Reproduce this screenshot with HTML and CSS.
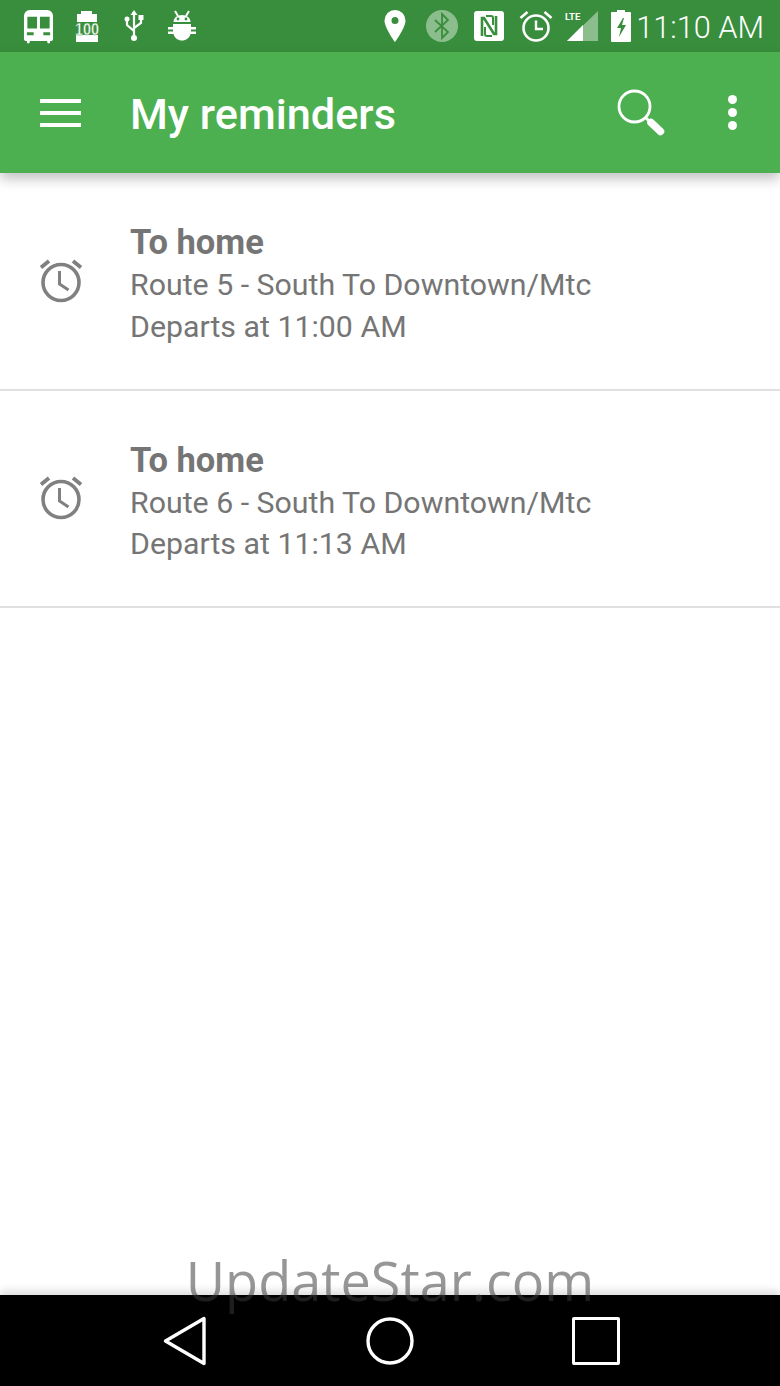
FILE: index.html
```html
<!DOCTYPE html>
<html lang="en">
<head>
  <meta charset="UTF-8" />
  <meta name="viewport" content="width=device-width, initial-scale=1.0" />
  <title>My reminders</title>
  <link rel="stylesheet" href="styles.css">
</head>
<body>
  <div class="status-bar">
    <div class="status-left">
      <svg class="ic-bus" viewBox="0 0 32 36"><path fill="#fff" fill-rule="evenodd" d="M7 1h18a6 6 0 0 1 6 6v24a2 2 0 0 1-2 2h-1v1a1.500 1.500 0 0 1-3 0v-1H7v1a1.500 1.500 0 0 1-3 0v-1H3a2 2 0 0 1-2-2V7a6 6 0 0 1 6-6zM4.500 8v12h10V8zm13 0v12h10V8zM4 24v3h7v-3zm17 0v3h7v-3z"/></svg>
      <svg class="ic-film" viewBox="0 0 24 32"><path fill="#fff" d="M6 1h11v3h5v8H2V4h4z"/><path fill="#fff" d="M1 25h22v7H1z"/><text x="12" y="25" text-anchor="middle" textLength="24" lengthAdjust="spacingAndGlyphs" class="film-num">100</text></svg>
      <svg class="ic-usb" viewBox="0 0 20 32"><g fill="none" stroke="#fff" stroke-width="2.200"><path d="M10 4v24"/><path d="M3 10v5l7 6"/><path d="M17 8v5l-7 5"/></g><path fill="#fff" d="M10 0l3.500 5h-7z"/><circle cx="10" cy="28" r="3" fill="#fff"/><circle cx="3" cy="9" r="2.500" fill="#fff"/><path fill="#fff" d="M14.500 5h5v5h-5z"/></svg>
      <svg class="ic-bug" viewBox="0 0 30 32"><path fill="#fff" d="M6.500 12c0-4 3.500-7 8.500-7s8.500 3 8.500 7z"/><path stroke="#fff" stroke-width="2" d="M8 1l3 5M22 1l-3 5"/><path fill="#fff" d="M6 14h18v3h5v2.500h-5v2h5V24h-5.500c-1 4-4.500 6.500-8.500 6.500S7.500 28 6.500 24H1v-2.500h5v-2H1V17h5z"/><circle cx="11" cy="9" r="1.400" fill="#388e3c"/><circle cx="19" cy="9" r="1.400" fill="#388e3c"/></svg>
    </div>
    <div class="status-right">
      <svg class="ic-pin" viewBox="0 0 22 32"><path fill="#fff" fill-rule="evenodd" d="M11 0a10.500 10.500 0 0 1 10.500 10.500C21.500 18 11 32 11 32S.5 18 .5 10.500A10.500 10.500 0 0 1 11 0zm0 7a3.500 3.500 0 1 0 0 7 3.500 3.500 0 0 0 0-7z"/></svg>
      <svg class="ic-bt" viewBox="0 0 32 32"><circle cx="16" cy="16" r="16" fill="#fff" fill-opacity=".42"/><path fill="none" stroke="#388e3c" stroke-width="1.800" d="M9 10l13 12-6 6V4l6 6-13 12"/></svg>
      <svg class="ic-nfc" viewBox="0 0 30 30"><rect width="30" height="30" rx="3" fill="#fff"/><path fill="none" stroke="#388e3c" stroke-width="2.600" d="M8 25V7h2l10 16h2V5"/><path fill="none" stroke="#388e3c" stroke-width="2" d="M12 5h5a2 2 0 0 1 2 2v7M18 25h-5a2 2 0 0 1-2-2v-7"/></svg>
      <svg class="ic-alarm" viewBox="0 0 34 32"><circle cx="17" cy="18" r="12.500" fill="none" stroke="#fff" stroke-width="2.600"/><path fill="none" stroke="#fff" stroke-width="2.400" d="M17 10.500V19h7"/><path fill="none" stroke="#fff" stroke-width="2.600" d="M1.500 8L8.500 2M32.500 8l-7-6"/></svg>
      <svg class="ic-signal" viewBox="0 0 34 32"><path fill="#fff" fill-opacity=".42" d="M32 1v30H1z"/><path fill="#fff" d="M17 15v16H1z"/><text x="-1" y="10" class="lte">LTE</text></svg>
      <svg class="ic-battery" viewBox="0 0 20 32"><path fill="#fff" d="M6 0h8v2h5a1 1 0 0 1 1 1v28a1 1 0 0 1-1 1H1a1 1 0 0 1-1-1V3a1 1 0 0 1 1-1h5z"/><path fill="#388e3c" d="M12 8l-6 10h4l-2 9 7-12h-4l2-7z"/></svg>
      <span class="clock">11:10 AM</span>
    </div>
  </div>

  <header class="toolbar">
    <button class="menu-btn" aria-label="Menu"><span></span><span></span><span></span></button>
    <h1>My reminders</h1>
    <svg class="ic-search" viewBox="0 0 48 48"><circle cx="17.500" cy="17.500" r="15.500" fill="none" stroke="#fff" stroke-width="2.800"/><path stroke="#fff" stroke-width="3" d="M28 28l5 5"/><path stroke="#fff" stroke-width="7.500" stroke-linecap="round" d="M34 33.500l9.500 9"/></svg>
    <div class="more"><span></span><span></span><span></span></div>
  </header>

  <main class="list">
    <div class="reminder">
      <svg class="ic-clock" viewBox="0 0 44 44"><circle cx="22" cy="24.500" r="18" fill="none" stroke="#808080" stroke-width="3.600"/><path fill="none" stroke="#808080" stroke-width="3" d="M20.500 13v13l9 6"/><path fill="none" stroke="#808080" stroke-width="3.800" d="M2 9.500L10 3M42 9.500L34 3"/></svg>
      <div class="reminder-text">
        <div class="title">To home</div>
        <div class="line">Route 5 - South To Downtown/Mtc</div>
        <div class="line">Departs at 11:00 AM</div>
      </div>
    </div>
    <div class="reminder">
      <svg class="ic-clock" viewBox="0 0 44 44"><circle cx="22" cy="24.500" r="18" fill="none" stroke="#808080" stroke-width="3.600"/><path fill="none" stroke="#808080" stroke-width="3" d="M20.500 13v13l9 6"/><path fill="none" stroke="#808080" stroke-width="3.800" d="M2 9.500L10 3M42 9.500L34 3"/></svg>
      <div class="reminder-text">
        <div class="title">To home</div>
        <div class="line">Route 6 - South To Downtown/Mtc</div>
        <div class="line">Departs at 11:13 AM</div>
      </div>
    </div>
  </main>

  <nav class="nav-bar">
    <svg class="ic-back" viewBox="0 0 44 50"><path fill="none" stroke="#fff" stroke-width="3.400" stroke-linejoin="round" d="M2.500 25L41 2.500v45z"/></svg>
    <svg class="ic-home" viewBox="0 0 48 48"><circle cx="24" cy="24" r="22" fill="none" stroke="#fff" stroke-width="3.400"/></svg>
    <div class="ic-recent"></div>
  </nav>

  <div class="watermark">UpdateStar.com</div>
</body>
</html>
```

FILE: styles.css
```css
:root {
  --green: #4caf50;
  --green-dark: #388e3c;
  --text-grey: #757575;
  --divider: #e0e0e0;
}

* {
  margin: 0;
  padding: 0;
  box-sizing: border-box;
}

html, body {
  height: 1386px;
  overflow: hidden;
}

body {
  font-family: Roboto, sans-serif;
  background-color: #fff;
  display: flex;
  flex-direction: column;
  position: relative;
}

svg {
  display: block;
  flex: none;
  overflow: visible;
}

/* status bar */
.status-bar {
  height: 52px;
  background-color: var(--green-dark);
  display: flex;
  align-items: center;
  justify-content: space-between;
  padding: 0 16px 0 23px;
  color: #fff;
}

.status-left, .status-right {
  display: flex;
  align-items: center;
}

.ic-bus { width: 31px; height: 35px; }
.ic-film { width: 24px; height: 32px; margin-left: 21px; }
.ic-usb { width: 20px; height: 32px; margin-left: 25px; }
.ic-bug { width: 30px; height: 32px; margin-left: 23px; }

.film-num {
  font: 700 17px "Liberation Sans", sans-serif;
  fill: #fff;
  stroke: var(--green-dark);
  stroke-width: .5px;
}

.ic-pin { width: 22px; height: 32px; }
.ic-bt { width: 32px; height: 32px; margin-left: 20px; }
.ic-nfc { width: 30px; height: 30px; margin-left: 16px; }
.ic-alarm { width: 34px; height: 32px; margin-left: 15px; }
.ic-signal { width: 34px; height: 32px; margin-left: 13px; }
.ic-battery { width: 20px; height: 32px; margin-left: 11px; }

.lte {
  font: 700 9.500px Roboto, sans-serif;
  fill: #fff;
}

.clock {
  font-size: 30.700px;
  font-weight: 300;
  margin-left: 5px;
  padding-top: 3px;
  line-height: 52px;
}

/* toolbar */
.toolbar {
  height: 121px;
  background-color: var(--green);
  display: flex;
  align-items: center;
  padding: 0 40px;
  color: #fff;
  box-shadow: 0 6px 12px rgba(0, 0, 0, 0.24);
  position: relative;
  z-index: 1;
}

.menu-btn {
  width: 41px;
  background: none;
  border: none;
  display: flex;
  flex-direction: column;
  gap: 8px;
  flex: none;
}

.menu-btn span {
  height: 4px;
  background-color: #fff;
}

.toolbar h1 {
  font-size: 43.300px;
  font-weight: 500;
  margin: 3px 0 0 49px;
  flex: 1;
}

.ic-search {
  width: 48px;
  height: 48px;
  margin-right: 63px;
}

.more {
  display: flex;
  flex-direction: column;
  gap: 4px;
  margin-right: 3px;
}

.more span {
  width: 9px;
  height: 9px;
  border-radius: 50%;
  background-color: #fff;
}

/* reminders */
.list {
  flex: 1;
}

.reminder {
  height: 217.500px;
  display: flex;
  align-items: center;
  padding: 0 0 0 39px;
  border-bottom: 2px solid var(--divider);
  color: var(--text-grey);
}

.ic-clock {
  width: 44px;
  height: 44px;
  margin-bottom: 2px;
}

.reminder-text {
  margin-left: 47px;
  padding-top: 6px;
}

.title {
  font-size: 34.500px;
  font-weight: 700;
  line-height: 44px;
}

.line {
  font-size: 30.300px;
  line-height: 41.500px;
}

/* nav bar */
.nav-bar {
  height: 91px;
  background-color: #000;
  display: flex;
  align-items: center;
  box-shadow: 0 -4px 8px rgba(0, 0, 0, 0.14);
  padding: 0 160px 0 163px;
  justify-content: space-between;
}

.ic-back { width: 44px; height: 50px; }
.ic-home { width: 48px; height: 48px; }

.ic-recent {
  width: 48px;
  height: 48px;
  border: 3.500px solid #fff;
  border-radius: 2px;
}

/* sits on top of everything, straddles the nav bar edge */
.watermark {
  position: absolute;
  left: 0;
  right: 0;
  top: 1243px;
  text-align: center;
  font-family: "Open Sans", sans-serif;
  font-weight: 400;
  font-size: 54px;
  line-height: 75px;
  color: rgba(57, 57, 57, 0.53);
}
```
